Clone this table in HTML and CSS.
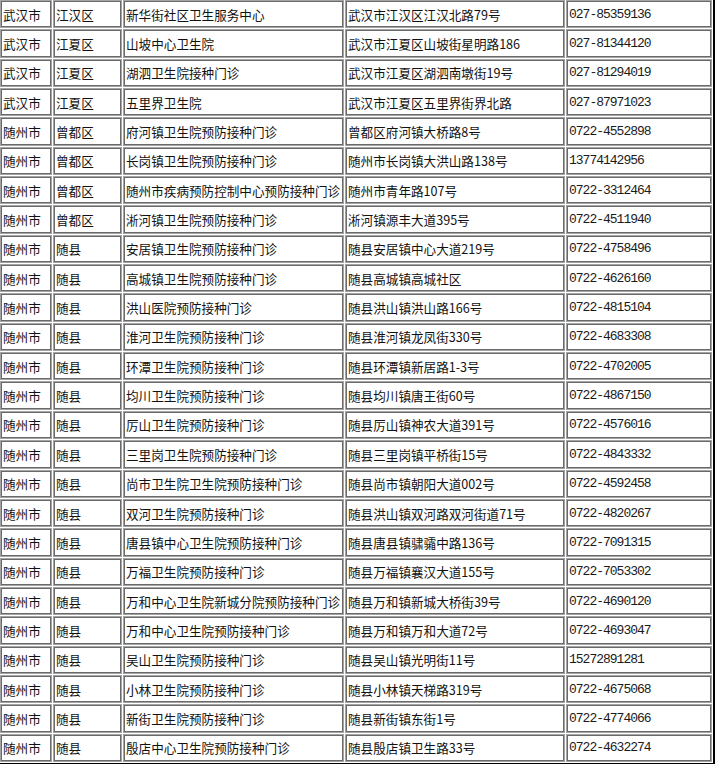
FILE: index.html
```html
<!DOCTYPE html>
<html lang="zh-CN">
<head>
<meta charset="utf-8">
<title>预防接种门诊</title>
<link rel="stylesheet" href="styles.css">
</head>
<body>
<table class="clinics">
<colgroup>
<col class="c-city"><col class="c-dist"><col class="c-name"><col class="c-addr"><col class="c-tel">
</colgroup>
<tbody>
<tr><td>武汉市</td><td>江汉区</td><td>新华街社区卫生服务中心</td><td>武汉市江汉区江汉北路79号</td><td class="tel">027-85359136</td></tr>
<tr><td>武汉市</td><td>江夏区</td><td>山坡中心卫生院</td><td>武汉市江夏区山坡街星明路186</td><td class="tel">027-81344120</td></tr>
<tr><td>武汉市</td><td>江夏区</td><td>湖泗卫生院接种门诊</td><td>武汉市江夏区湖泗南墩街19号</td><td class="tel">027-81294019</td></tr>
<tr><td>武汉市</td><td>江夏区</td><td>五里界卫生院</td><td>武汉市江夏区五里界街界北路</td><td class="tel">027-87971023</td></tr>
<tr><td>随州市</td><td>曾都区</td><td>府河镇卫生院预防接种门诊</td><td>曾都区府河镇大桥路8号</td><td class="tel">0722-4552898</td></tr>
<tr><td>随州市</td><td>曾都区</td><td>长岗镇卫生院预防接种门诊</td><td>随州市长岗镇大洪山路138号</td><td class="tel">13774142956</td></tr>
<tr><td>随州市</td><td>曾都区</td><td>随州市疾病预防控制中心预防接种门诊</td><td>随州市青年路107号</td><td class="tel">0722-3312464</td></tr>
<tr><td>随州市</td><td>曾都区</td><td>淅河镇卫生院预防接种门诊</td><td>淅河镇源丰大道395号</td><td class="tel">0722-4511940</td></tr>
<tr><td>随州市</td><td>随县</td><td>安居镇卫生院预防接种门诊</td><td>随县安居镇中心大道219号</td><td class="tel">0722-4758496</td></tr>
<tr><td>随州市</td><td>随县</td><td>高城镇卫生院预防接种门诊</td><td>随县高城镇高城社区</td><td class="tel">0722-4626160</td></tr>
<tr><td>随州市</td><td>随县</td><td>洪山医院预防接种门诊</td><td>随县洪山镇洪山路166号</td><td class="tel">0722-4815104</td></tr>
<tr><td>随州市</td><td>随县</td><td>淮河卫生院预防接种门诊</td><td>随县淮河镇龙凤街330号</td><td class="tel">0722-4683308</td></tr>
<tr><td>随州市</td><td>随县</td><td>环潭卫生院预防接种门诊</td><td>随县环潭镇新居路1-3号</td><td class="tel">0722-4702005</td></tr>
<tr><td>随州市</td><td>随县</td><td>均川卫生院预防接种门诊</td><td>随县均川镇唐王街60号</td><td class="tel">0722-4867150</td></tr>
<tr><td>随州市</td><td>随县</td><td>厉山卫生院预防接种门诊</td><td>随县厉山镇神农大道391号</td><td class="tel">0722-4576016</td></tr>
<tr><td>随州市</td><td>随县</td><td>三里岗卫生院预防接种门诊</td><td>随县三里岗镇平桥街15号</td><td class="tel">0722-4843332</td></tr>
<tr><td>随州市</td><td>随县</td><td>尚市卫生院卫生院预防接种门诊</td><td>随县尚市镇朝阳大道002号</td><td class="tel">0722-4592458</td></tr>
<tr><td>随州市</td><td>随县</td><td>双河卫生院预防接种门诊</td><td>随县洪山镇双河路双河街道71号</td><td class="tel">0722-4820267</td></tr>
<tr><td>随州市</td><td>随县</td><td>唐县镇中心卫生院预防接种门诊</td><td>随县唐县镇骕骦中路136号</td><td class="tel">0722-7091315</td></tr>
<tr><td>随州市</td><td>随县</td><td>万福卫生院预防接种门诊</td><td>随县万福镇襄汉大道155号</td><td class="tel">0722-7053302</td></tr>
<tr><td>随州市</td><td>随县</td><td>万和中心卫生院新城分院预防接种门诊</td><td>随县万和镇新城大桥街39号</td><td class="tel">0722-4690120</td></tr>
<tr><td>随州市</td><td>随县</td><td>万和中心卫生院预防接种门诊</td><td>随县万和镇万和大道72号</td><td class="tel">0722-4693047</td></tr>
<tr><td>随州市</td><td>随县</td><td>吴山卫生院预防接种门诊</td><td>随县吴山镇光明街11号</td><td class="tel">15272891281</td></tr>
<tr><td>随州市</td><td>随县</td><td>小林卫生院预防接种门诊</td><td>随县小林镇天梯路319号</td><td class="tel">0722-4675068</td></tr>
<tr><td>随州市</td><td>随县</td><td>新街卫生院预防接种门诊</td><td>随县新街镇东街1号</td><td class="tel">0722-4774066</td></tr>
<tr><td>随州市</td><td>随县</td><td>殷店中心卫生院预防接种门诊</td><td>随县殷店镇卫生路33号</td><td class="tel">0722-4632274</td></tr>
</tbody>
</table>
</body>
</html>
```
FILE: styles.css
```css
html, body {
  margin: 0;
  padding: 0;
  background: #fff;
  overflow: hidden;
}

.clinics {
  margin: -3px 0 0 -3px;
  width: 718px;
  table-layout: fixed;
  border-collapse: separate;
  border-spacing: 1px;
  border: 2px solid;
  border-color: #d8d8d8 #000 #000 #d8d8d8;
  font-family: "Noto Sans CJK SC", "Noto Sans", sans-serif;
  font-size: 12.6px;
  line-height: 15px;
  color: #111;
}

.c-city { width: 52px; }
.c-dist { width: 69px; }
.c-name { width: 221px; }
.c-addr { width: 220px; }
.c-tel  { width: 146px; }

.clinics td {
  box-sizing: border-box;
  height: 28.35px;
  padding: 0 0 0 2px;
  border: 1px solid #a4a4a4;
  box-shadow: inset 0 0 0 1px #6a6a6a;
  vertical-align: middle;
  white-space: nowrap;
  overflow: hidden;
}

.clinics td.tel {
  font-family: "Liberation Mono", "DejaVu Sans Mono", monospace;
  font-size: 13px;
  letter-spacing: -1px;
  color: #1a1a1a;
}
```
